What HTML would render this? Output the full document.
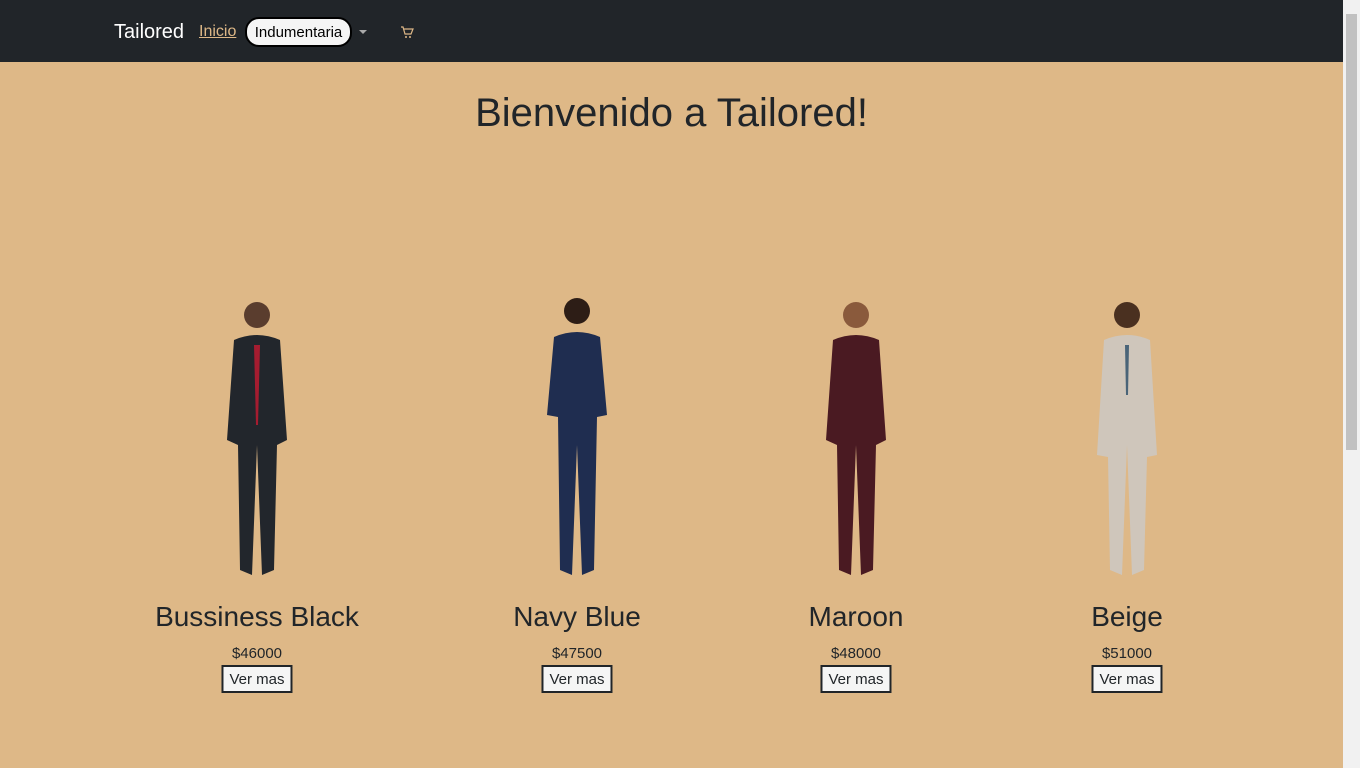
<!DOCTYPE html>
<html><head><style>
body{margin:0;width:1360px;height:768px;overflow:hidden;background:#deb887;font-family:"Liberation Sans",sans-serif;position:relative}
.nav{position:absolute;left:0;top:0;width:1343px;height:62px;background:#212529}
.sb{position:absolute;right:0;top:0;width:17px;height:768px;background:#f1f1f1}
.sb div{position:absolute;left:3px;top:14px;width:11px;height:436px;background:#c1c1c1}
.brand{position:absolute;left:114px;top:21px;color:#fff;font-size:20px}
.inicio{position:absolute;left:199px;top:23px;color:#deb887;font-size:16px;text-decoration:underline}
.ind{position:absolute;left:245px;top:17px;height:26px;border:2px solid #000;border-radius:14px;background:#f5f5f5;font-size:15px;line-height:27px;text-align:center;width:103px}
.caret{position:absolute;left:359px;top:30px;border:4px solid transparent;border-top-color:#aaa}
h1{position:absolute;left:0;width:1343px;top:91px;margin:0;text-align:center;font-size:40px;font-weight:normal;color:#212529}
.card{position:absolute;top:295px;width:260px;text-align:center;color:#212529}
.card h2{margin:0;font-weight:normal;font-size:28px;position:absolute;top:306px;width:100%}
.card .p{position:absolute;top:350px;width:100%;font-size:15px}
.card .b{position:absolute;top:370px;left:50%;transform:translateX(-50%);border:2px solid #212529;background:#f5f5f5;font-size:15px;padding:4px 6px 3px;white-space:nowrap}
svg.m{position:absolute;left:85px;top:0}
</style></head><body>
<div class="nav"></div>
<div class="sb"><div></div></div>
<div class="brand">Tailored</div>
<div class="inicio">Inicio</div>
<div class="ind">Indumentaria</div>
<div class="caret"></div>
<svg style="position:absolute;left:400px;top:26px" width="14" height="13" viewBox="0 0 14 13"><path d="M1 1h2l2 7h6l2-5H4" fill="none" stroke="#deb887" stroke-width="1.2"/><circle cx="6" cy="11" r="1" fill="#deb887"/><circle cx="10" cy="11" r="1" fill="#deb887"/></svg>
<h1>Bienvenido a Tailored!</h1>
<div class="card" style="left:127px"><svg class="m" width="90" height="300"><circle cx="45" cy="20" r="13" fill="#5a3d2e"/><path d="M22 45 Q45 35 68 45 L75 145 L65 150 L62 275 L50 280 L45 150 L40 280 L28 275 L26 150 L15 145Z" fill="#22262c"/><path d="M42 50h6l-2 80h-2z" fill="#a51c30"/></svg><h2>Bussiness Black</h2><div class="p">$46000</div><div class="b">Ver mas</div></div>
<div class="card" style="left:447px"><svg class="m" width="90" height="300"><circle cx="45" cy="16" r="13" fill="#2d1d16"/><path d="M22 42 Q45 32 68 42 L75 120 L65 122 L62 275 L50 280 L45 150 L40 280 L28 275 L26 122 L15 120Z" fill="#1f2d50"/></svg><h2>Navy Blue</h2><div class="p">$47500</div><div class="b">Ver mas</div></div>
<div class="card" style="left:726px"><svg class="m" width="90" height="300"><circle cx="45" cy="20" r="13" fill="#8a5a3c"/><path d="M22 45 Q45 35 68 45 L75 145 L65 150 L62 275 L50 280 L45 150 L40 280 L28 275 L26 150 L15 145Z" fill="#4a1a22"/></svg><h2>Maroon</h2><div class="p">$48000</div><div class="b">Ver mas</div></div>
<div class="card" style="left:997px"><svg class="m" width="90" height="300"><circle cx="45" cy="20" r="13" fill="#4a3020"/><path d="M22 45 Q45 35 68 45 L75 160 L65 162 L62 275 L50 280 L45 150 L40 280 L28 275 L26 162 L15 160Z" fill="#cfc6bb"/><path d="M43 50h4l-1 50h-2z" fill="#4a6478"/></svg><h2>Beige</h2><div class="p">$51000</div><div class="b">Ver mas</div></div>
</body></html>
